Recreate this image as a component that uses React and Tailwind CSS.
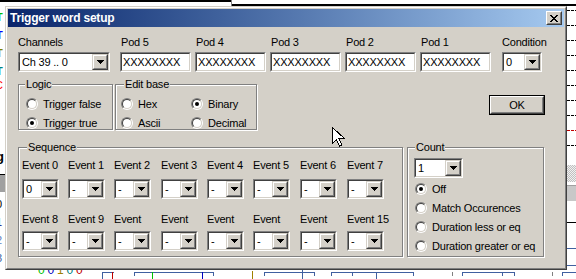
import React from "react";

function Sunken({ className = "", children }) {
  return (
    <div className={`border border-t-[#808080] border-l-[#808080] border-b-white border-r-white ${className}`}>
      <div className="flex h-full w-full border border-t-[#404040] border-l-[#404040] border-b-[#d4d0c8] border-r-[#d4d0c8] bg-white">
        {children}
      </div>
    </div>
  );
}

function DropBtn() {
  return (
    <div className="h-full w-[16px] shrink-0 border border-t-[#d4d0c8] border-l-[#d4d0c8] border-b-[#404040] border-r-[#404040] bg-[#d4d0c8]">
      <div className="flex h-full w-full items-center justify-center border border-t-white border-l-white border-b-[#808080] border-r-[#808080]">
        <svg width="7" height="4" viewBox="0 0 7 4" shapeRendering="crispEdges">
          <path d="M0 0h7v1h-1v1h-1v1h-1v1h-1v-1h-1v-1h-1v-1h-1z" fill="#000" />
        </svg>
      </div>
    </div>
  );
}

function Combo({ value, className = "" }) {
  return (
    <Sunken className={`h-[20px] ${className}`}>
      <span className="flex-1 overflow-hidden whitespace-nowrap pl-[2px] leading-[16px]">{value}</span>
      <DropBtn />
    </Sunken>
  );
}

function Radio({ checked, label, className = "" }) {
  return (
    <div className={`flex items-center gap-[5px] ${className}`}>
      <div className="h-[12px] w-[12px] shrink-0 rounded-full border border-t-[#808080] border-l-[#808080] border-b-white border-r-white">
        <div className="flex h-full w-full items-center justify-center rounded-full border border-t-[#404040] border-l-[#404040] border-b-[#d4d0c8] border-r-[#d4d0c8] bg-white">
          {checked && <div className="h-[4px] w-[4px] rounded-full bg-black" />}
        </div>
      </div>
      <span className="leading-[12px] whitespace-nowrap">{label}</span>
    </div>
  );
}

function Group({ label, labelLeft, className = "", children }) {
  return (
    <div className={`relative border border-[#808080] shadow-[inset_1px_1px_0_#fff,1px_1px_0_#fff] ${className}`}>
      <span className={`absolute top-[-7px] ${labelLeft} bg-[#d4d0c8] px-[1px] leading-[12px]`}>{label}</span>
      {children}
    </div>
  );
}

const pods = ["Pod 5", "Pod 4", "Pod 3", "Pod 2", "Pod 1"];
const colGap = ["", "ml-[9px]", "ml-[9px]", "ml-[10px]", "ml-[9px]", "ml-[9px]", "ml-[10px]", "ml-[10px]"];
const row1 = ["Event 0", "Event 1", "Event 2", "Event 3", "Event 4", "Event 5", "Event 6", "Event 7"];
const row2 = ["Event 8", "Event 9", "Event", "Event", "Event", "Event", "Event", "Event 15"];

function EventRow({ labels, first, className = "", selGap }) {
  return (
    <div className={`flex ${className}`}>
      {labels.map((l, i) => (
        <div key={i} className={`flex w-[37px] flex-col ${colGap[i]}`}>
          <span className="whitespace-nowrap leading-[12px]">{l}</span>
          <Combo value={i === 0 && first ? "0" : "-"} className={`w-[37px] ${selGap}`} />
        </div>
      ))}
    </div>
  );
}

// the logic analyser window that sits behind the dialog
function Backdrop() {
  const dashes = [4, 19, 34, 49, 64, 79, 94, 109, 139];
  return (
    <div className="flex h-full flex-col">
      <svg width="576" height="6" className="shrink-0" shapeRendering="crispEdges">
        <rect x="0" y="0" width="232" height="2" fill="#000" />
        <rect x="231" y="0" width="1" height="6" fill="#808080" />
        <rect x="232" y="4" width="344" height="2" fill="#000" />
      </svg>
      <div className="flex flex-1">
        <div className="flex w-[5px] flex-col overflow-hidden pt-[2px] font-bold leading-[18px]">
          <span className="-ml-[4px] text-[#00c000]">T</span>
          <span className="-ml-[4px] text-[#0000ff]">T</span>
          <span className="-ml-[4px] text-[#808000]">T</span>
          <span className="-ml-[4px] text-[#008080]">T</span>
          <span className="-ml-[5px] -mt-[4px] font-normal text-[#ff0000]">C</span>
          <span className="-ml-[4px] mt-[54px] text-[13px] text-black">g</span>
          <div className="mt-[8px] h-[18px] border-t border-black bg-[#a0a0a0]" />
          <div className="flex flex-col pt-[3px] font-normal">
            <span className="-ml-[4px] text-black">0</span>
            <span className="-ml-[4px] text-[#000080]">1</span>
            <span className="-ml-[4px] text-[#6080c0]">2</span>
            <span className="-ml-[4px] text-[#4060a0]">3</span>
          </div>
        </div>
        <div className="flex-1" />
        <svg width="9" height="263" className="shrink-0" shapeRendering="crispEdges">
          <defs>
            <pattern id="hatch" width="2" height="2" patternUnits="userSpaceOnUse">
              <rect width="2" height="2" fill="#f0f0f0" />
              <rect width="1" height="1" fill="#c0c0c0" />
              <rect x="1" y="1" width="1" height="1" fill="#c0c0c0" />
            </pattern>
          </defs>
          {dashes.map((y) => (
            <line key={y} x1="0" x2="9" y1={y + 0.5} y2={y + 0.5} stroke="#000" strokeDasharray="3 1" />
          ))}
          <line x1="0" x2="9" y1="124.5" y2="124.5" stroke="#c00000" strokeDasharray="3 1" />
          <rect x="0" y="159" width="9" height="17" fill="url(#hatch)" />
          <rect x="0" y="179" width="9" height="16" fill="#c8c8c8" />
          <rect x="0" y="179" width="9" height="1" fill="#a0a0a0" />
          <rect x="0" y="216" width="9" height="1" fill="#000" />
          <rect x="0" y="242" width="9" height="1" fill="#4060a0" />
          <rect x="0" y="259" width="9" height="1" fill="#4060a0" />
        </svg>
      </div>
      <div className="flex h-[10px] shrink-0">
        <div className="-mt-[5px] ml-[38px] flex gap-[3px] text-[12px] leading-[12px]">
          <span className="text-[#00c000]">0</span>
          <span className="text-[#0000c0]">0</span>
          <span className="text-[#a08000]">1</span>
          <span className="text-[#008080]">0</span>
          <span className="text-[#c00000]">0</span>
        </div>
        <svg width="496" height="10" className="ml-[2px] shrink-0" shapeRendering="crispEdges">
          <g transform="translate(-80 0)">
            <path d="M98.5 10V3.5H109.5M108.5 3.5V10" fill="none" stroke="#4060a0" />
            <line x1="108.5" x2="108.5" y1="3" y2="10" stroke="#c00000" />
            <path d="M130.5 7V3.5H209.5V7" fill="none" stroke="#4060a0" />
            <line x1="148.5" x2="148.5" y1="3" y2="10" stroke="#00c000" />
            <line x1="198.5" x2="198.5" y1="3" y2="10" stroke="#0000c0" />
            <line x1="248.5" x2="248.5" y1="2" y2="10" stroke="#a08000" />
            <path d="M260.5 7V3.5H310.5V7" fill="none" stroke="#4060a0" />
            <line x1="298.5" x2="298.5" y1="1" y2="10" stroke="#4060a0" />
            <path d="M327.5 7V3.5H409.5V7" fill="none" stroke="#4060a0" />
            <line x1="348.5" x2="348.5" y1="3" y2="7" stroke="#4060a0" />
            <line x1="372.5" x2="372.5" y1="3" y2="10" stroke="#4060a0" />
            <line x1="448.5" x2="448.5" y1="3" y2="7" stroke="#808080" />
            <path d="M458.5 7V3.5H510.5V7" fill="none" stroke="#4060a0" />
            <line x1="498.5" x2="498.5" y1="3" y2="7" stroke="#4060a0" />
            <line x1="548.5" x2="548.5" y1="3" y2="7" stroke="#808080" />
            <path d="M558.5 7V3.5H576" fill="none" stroke="#4060a0" />
          </g>
        </svg>
      </div>
    </div>
  );
}

export default function App() {
  return (
    <div className="relative h-[279px] w-[576px] overflow-hidden bg-white font-['Liberation_Sans',Arial,sans-serif] text-[11px] tracking-[-0.2px] text-black">
      <Backdrop />

      {/* dialog window lies over the app behind it */}
      <div className="absolute left-[5px] top-[6px] h-[264px] w-[562px] border border-t-[#d4d0c8] border-l-[#d4d0c8] border-b-[#404040] border-r-[#404040] bg-[#d4d0c8]">
        <div className="h-full w-full border border-t-white border-l-white border-b-[#808080] border-r-[#808080] p-[1px]">
          {/* title bar */}
          <div className="flex h-[18px] items-center bg-gradient-to-r from-[#0a246a] to-[#a6caf0] pl-[2px] pr-[2px]">
            <span className="flex-1 text-[12px] font-bold leading-[18px] text-white">Trigger word setup</span>
            <div className="h-[14px] w-[16px] border border-t-white border-l-white border-b-[#404040] border-r-[#404040] bg-[#d4d0c8]">
              <div className="flex h-full w-full items-center justify-center border border-t-[#d4d0c8] border-l-[#d4d0c8] border-b-[#808080] border-r-[#808080]">
                <svg width="8" height="7" viewBox="0 0 8 7" shapeRendering="crispEdges">
                  <path d="M0 0h2v1h1v1h2v-1h1v-1h2v1h-1v1h-1v1h-1v1h1v1h1v1h1v1h-2v-1h-1v-1h-2v1h-1v1h-2v-1h1v-1h1v-1h1v-1h-1v-1h-1v-1h-1z" fill="#000" />
                </svg>
              </div>
            </div>
          </div>

          {/* content */}
          <div className="pl-[10px] pt-[9px]">
            <div className="flex">
              <div className="flex flex-col">
                <span className="mb-[4px] leading-[12px]">Channels</span>
                <Combo value="Ch 39 .. 0" className="w-[92px]" />
              </div>
              <div className="ml-[10px] flex gap-[4px]">
                {pods.map((p) => (
                  <div key={p} className="flex flex-col">
                    <span className="mb-[4px] pl-[1px] leading-[12px]">{p}</span>
                    <Sunken className="h-[20px] w-[71px]">
                      <span className="pl-[1px] leading-[16px]">XXXXXXXX</span>
                    </Sunken>
                  </div>
                ))}
              </div>
              <div className="ml-[11px] flex flex-col">
                <span className="mb-[4px] leading-[12px]">Condition</span>
                <Combo value="0" className="w-[40px]" />
              </div>
            </div>

            <div className="mt-[12px] flex items-start">
              <Group label="Logic" labelLeft="left-[6px]" className="h-[46px] w-[95px] pl-[7px] pt-[9px]">
                <Radio label="Trigger false" className="h-[19px]" />
                <Radio label="Trigger true" checked className="h-[19px]" />
              </Group>
              <Group label="Edit base" labelLeft="left-[8px]" className="ml-[2px] grid h-[46px] w-[142px] grid-cols-[70px_1fr] pl-[5px] pt-[9px]">
                <Radio label="Hex" className="h-[19px]" />
                <Radio label="Binary" checked className="h-[19px]" />
                <Radio label="Ascii" className="h-[19px]" />
                <Radio label="Decimal" className="h-[19px]" />
              </Group>
              <div className="ml-[232px] mt-[11px] h-[20px] w-[56px] border border-black">
                <div className="h-full w-full border border-t-white border-l-white border-b-[#404040] border-r-[#404040]">
                  <div className="flex h-full w-full items-center justify-center border border-t-[#d4d0c8] border-l-[#d4d0c8] border-b-[#808080] border-r-[#808080] leading-[12px]">
                    OK
                  </div>
                </div>
              </div>
            </div>

            <div className="mt-[17px] flex">
              <Group label="Sequence" labelLeft="left-[8px]" className="h-[110px] w-[385px] pl-[3px] pt-[11px]">
                <EventRow labels={row1} first selGap="mt-[8px]" />
                <EventRow labels={row2} className="mt-[14px]" selGap="mt-[6px]" />
              </Group>
              <Group label="Count" labelLeft="left-[7px]" className="ml-[4px] h-[110px] w-[137px] pt-[10px]">
                <Combo value="1" className="ml-[6px] w-[49px]" />
                <div className="mt-[1px] pl-[7px]">
                  <Radio label="Off" checked className="h-[19px]" />
                  <Radio label="Match Occurences" className="h-[19px]" />
                  <Radio label="Duration less or eq" className="h-[19px]" />
                  <Radio label="Duration greater or eq" className="h-[19px]" />
                </div>
              </Group>
            </div>
          </div>
        </div>
      </div>

      {/* mouse pointer */}
      <svg className="absolute left-[332px] top-[127px]" width="13" height="21" viewBox="0 0 13 21" shapeRendering="crispEdges">
        <path d="M0.5 0.5v16l4-4 3 6.5 2.5-1-3-6.5h5.5z" fill="#fff" stroke="#000" />
      </svg>
    </div>
  );
}
